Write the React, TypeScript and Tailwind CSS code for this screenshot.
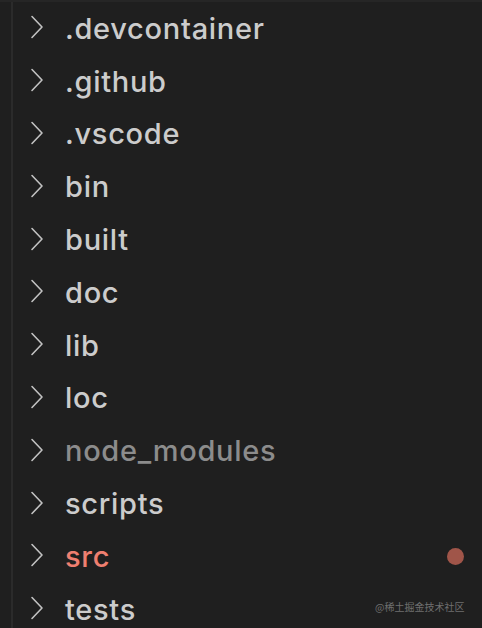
import React from "react";

const items: { name: string; color?: string; dot?: boolean }[] = [
  { name: ".devcontainer" },
  { name: ".github" },
  { name: ".vscode" },
  { name: "bin" },
  { name: "built" },
  { name: "doc" },
  { name: "lib" },
  { name: "loc" },
  { name: "node_modules", color: "text-[#8c8c8c]" },
  { name: "scripts" },
  { name: "src", color: "text-[#ef7f70]", dot: true },
  { name: "tests" },
];

function Chevron() {
  return (
    <svg width="14" height="24" viewBox="0 0 14 24" className="shrink-0 -mt-[2px]">
      <path d="M2 1.5 L12 12 L2 22.5" fill="none" stroke="#c2c2c2" strokeWidth="1.6" strokeLinecap="round" strokeLinejoin="round" />
    </svg>
  );
}

export default function App() {
  return (
    <div
      className="relative w-[482px] h-[628px] overflow-hidden bg-[#1f1f1f]"
      style={{ fontFamily: "Inter, 'Noto Sans', sans-serif" }}
    >
      <div className="h-[2px] bg-[#262626]" />
      <div className="flex h-full">
        <div className="w-[11px] shrink-0" />
        <div className="w-[2px] shrink-0 bg-[#2b2b2b]" />
        <div className="flex flex-col flex-1">
          {items.map((it) => (
            <div key={it.name} className="flex items-center h-[52.8px] shrink-0 pl-[17px] pr-[18px]">
              <Chevron />
              <span className={`ml-[21px] text-[29px] leading-none font-medium tracking-[0.7px] ${it.color ?? "text-[#cccccc]"}`}>
                {it.name}
              </span>
              {it.dot && <span className="ml-auto w-[17px] h-[17px] rounded-full bg-[#a05549]" />}
            </div>
          ))}
        </div>
      </div>
      <div
        className="absolute left-[375px] top-[599px] text-[10px] text-[#6f6f6f]"
        style={{ fontFamily: "'Noto Sans CJK SC', sans-serif" }}
      >
        @稀土掘金技术社区
      </div>
    </div>
  );
}
